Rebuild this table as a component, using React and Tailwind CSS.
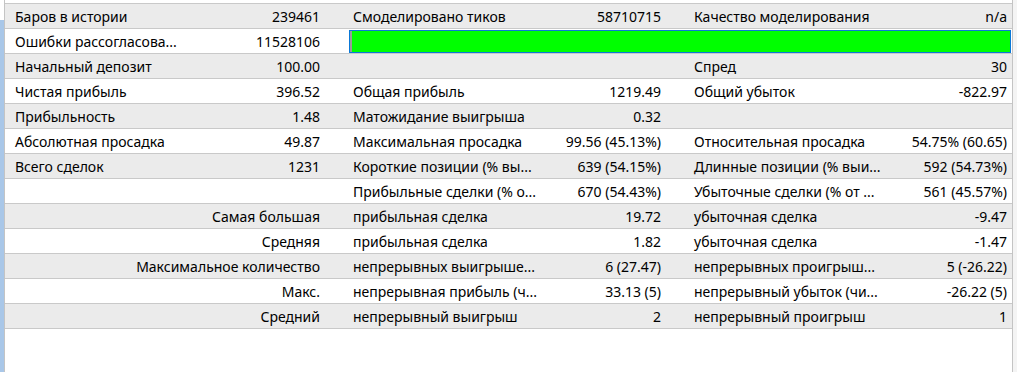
import React from "react";

// строки отчёта тестера: [метка1, значение1, метка2, значение2, метка3, значение3]
const rows = [
  ["Баров в истории", "239461", "Смоделировано тиков", "58710715", "Качество моделирования", "n/a"],
  ["Ошибки рассогласова...", "11528106", "bar"],
  ["Начальный депозит", "100.00", "", "", "Спред", "30"],
  ["Чистая прибыль", "396.52", "Общая прибыль", "1219.49", "Общий убыток", "-822.97"],
  ["Прибыльность", "1.48", "Матожидание выигрыша", "0.32", "", ""],
  ["Абсолютная просадка", "49.87", "Максимальная просадка", "99.56 (45.13%)", "Относительная просадка", "54.75% (60.65)"],
  ["Всего сделок", "1231", "Короткие позиции (% вы...", "639 (54.15%)", "Длинные позиции (% выи...", "592 (54.73%)"],
  ["", "", "Прибыльные сделки (% о...", "670 (54.43%)", "Убыточные сделки (% от ...", "561 (45.57%)"],
  ["span", "Самая большая", "прибыльная сделка", "19.72", "убыточная сделка", "-9.47"],
  ["span", "Средняя", "прибыльная сделка", "1.82", "убыточная сделка", "-1.47"],
  ["span", "Максимальное количество", "непрерывных выигрыше...", "6 (27.47)", "непрерывных проигрыш...", "5 (-26.22)"],
  ["span", "Макс.", "непрерывная прибыль (ч...", "33.13 (5)", "непрерывный убыток (чи...", "-26.22 (5)"],
  ["span", "Средний", "непрерывный выигрыш", "2", "непрерывный проигрыш", "1"],
];

const Row = ({ r, i }) => {
  const bg = i % 2 === 0 ? "bg-[#ebebeb]" : "bg-white";
  const cell = "h-[24px] flex items-center whitespace-nowrap overflow-hidden";
  return (
    <div className={`grid grid-cols-[180px_161px_200px_141px_203px_122px] border-b border-[#c9c9c9] ${bg}`}>
      {r[0] === "span" ? (
        <div className={`${cell} col-span-2 justify-end pr-[26px]`}>{r[1]}</div>
      ) : (
        <>
          <div className={`${cell} pl-[10px]`}>{r[0]}</div>
          <div className={`${cell} justify-end pr-[26px]`}>{r[1]}</div>
        </>
      )}
      {r[2] === "bar" ? (
        <div className="col-span-4 h-[24px] pl-[3px] pr-[1px] pt-[1px]">
          <div className="flex h-[23px] border border-[#0a78d7]">
            <div className="w-[2px] bg-[#9a9a9a]" />
            <div className="flex-1 bg-[#00ff00]" />
          </div>
        </div>
      ) : (
        <>
          <div className={`${cell} pl-[7px]`}>{r[2]}</div>
          <div className={`${cell} justify-end pr-[26px]`}>{r[3]}</div>
          <div className={`${cell} pl-[7px]`}>{r[4]}</div>
          <div className={`${cell} justify-end pr-[5px]`}>{r[5]}</div>
        </>
      )}
    </div>
  );
};

export default function App() {
  return (
    <div className="flex h-[372px] w-[1017px] overflow-hidden bg-white font-['Segoe_UI','Noto_Sans',sans-serif] text-[14px] text-black">
      <div className="mt-[20px] w-[4px] bg-[#a9c7e8]" />
      <div className="w-[1009px] border-x border-[#c4c4c4] pt-[3px]">
        <div className="border-t border-[#c9c9c9]">
          {rows.map((r, i) => (
            <Row key={i} r={r} i={i} />
          ))}
        </div>
      </div>
      <div className="flex-1 bg-[#f4f4f4]" />
    </div>
  );
}
